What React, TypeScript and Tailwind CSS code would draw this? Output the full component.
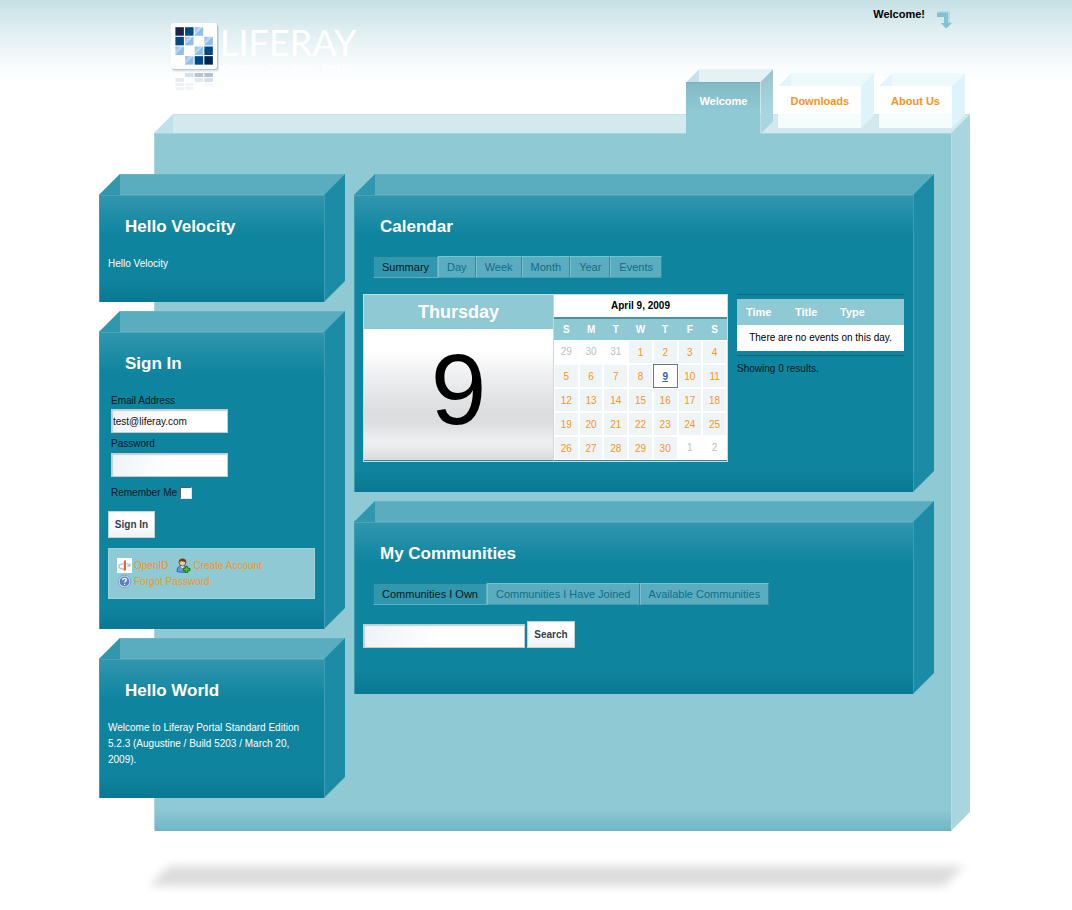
import React from "react";

function Panel({ title, children }: { title: string; children: React.ReactNode }) {
  return (
    <section className="grid grid-cols-[minmax(0,1fr)_21px] grid-rows-[21px_auto]">
      <div className="col-span-2 flex bg-[#6ab8c8] [clip-path:polygon(21px_0,100%_0,calc(100%_-_21px)_100%,0_100%)]">
        <div className="w-[21px] bg-[#3197ae]" />
        <div className="flex-1 border-b border-t border-[#66b3c4] bg-[#5aacbf]" />
      </div>
      <div className="border-l border-t border-l-[#3c9bb1] border-t-[#4aa4b8] bg-[#0e849f] bg-[linear-gradient(to_bottom,#3096ad_0,#0e849f_40px,#0e849f_calc(100%_-_22px),#0a7892_100%)] pb-[30px] pl-2 pr-[9px] pt-[19px]">
        <h2 className="mb-[17px] pl-[17px] text-[17px] font-bold leading-6 text-white">{title}</h2>
        {children}
      </div>
      <div className="-mt-[21px] border-l border-[#3f9db3] bg-[#1c8ba5] [clip-path:polygon(0_21px,100%_0,100%_calc(100%_-_21px),0_100%)]" />
    </section>
  );
}

function Tabs({ items }: { items: string[] }) {
  return (
    <nav className="mb-4 ml-[10px] flex">
      {items.map((t, i) => (
        <a
          key={t}
          href="#"
          className={
            i === 0
              ? "h-[22px] border border-b-[#5fb0c2] border-l-[#1f7f97] border-r-[#5fb0c2] border-t-[#1f7f97] bg-[#3197ae] px-2 text-[11px] leading-[21px] text-[#03191e]"
              : "h-[22px] border border-b-[#479bb0] border-l-[#7cc0ce] border-r-[#358ba2] border-t-[#7cc0ce] bg-[#5aacbf] px-2 text-[11px] leading-[21px] text-[#146c88]"
          }
        >
          {t}
        </a>
      ))}
    </nav>
  );
}

function SiteTab({ label, active = false }: { label: string; active?: boolean }) {
  if (active) {
    return (
      <a href="#" className="grid grid-cols-[74px_13px] grid-rows-[13px_52px] text-[11px] font-bold text-white">
        <span className="col-span-2 flex [clip-path:polygon(13px_0,100%_0,calc(100%_-_13px)_100%,0_100%)]">
          <span className="w-[13px] bg-[#c6e2e8]" />
          <span className="flex-1 bg-[#e4f1f5]" />
        </span>
        <span className="border-t border-[#79aeba] bg-[linear-gradient(to_bottom,#82b9c4,#8fc9d4_28px)] pt-2 text-center leading-5">{label}</span>
        <span className="-mt-[13px] bg-[linear-gradient(to_bottom,#99c4ce,#a8d5de_40px)] [clip-path:polygon(0_13px,100%_0,100%_calc(100%_-_13px),0_100%)]" />
      </a>
    );
  }
  return (
    <a href="#" className="mb-[5px] grid grid-cols-[auto_13px] grid-rows-[13px_42px] text-[11px] font-bold text-[#f7941d]">
      <span className="col-span-2 flex [clip-path:polygon(13px_0,100%_0,calc(100%_-_13px)_100%,0_100%)]">
        <span className="w-[13px] bg-[#e3f5fa]" />
        <span className="flex-1 bg-[#eef9fc]" />
      </span>
      <span className="bg-[linear-gradient(to_bottom,#fff_28px,#f5fcfc_28px)] px-[12px] pt-[5px] text-center leading-5">{label}</span>
      <span className="-mt-[13px] bg-[#dff4fa] [clip-path:polygon(0_13px,100%_0,100%_calc(100%_-_13px),0_100%)]" />
    </a>
  );
}

const logoCells: [number, number, string][] = [
  [0, 0, "#1c2350"], [1, 0, "#004a80"], [2, 0, "url(#pale)"],
  [0, 1, "#004a80"], [1, 1, "url(#pale)"], [3, 1, "url(#pale)"],
  [0, 2, "url(#pale)"], [2, 2, "url(#pale)"], [3, 2, "#004a80"],
  [1, 3, "url(#pale)"], [2, 3, "#004a80"], [3, 3, "#00264f"],
];

const reflected: [number, number, number, string, number][] = [
  [1, 51, 4, "#8fa9c5", 0.35], [2, 51, 4, "#53718f", 0.4], [3, 51, 4, "#53627f", 0.4],
  [0, 56, 4, "#8098b2", 0.2], [2, 56, 4, "#8098b2", 0.2], [3, 56, 4, "#8098b2", 0.3],
  [0, 61, 3, "#8098b2", 0.14], [1, 61, 3, "#8098b2", 0.1], [3, 61, 3, "#8098b2", 0.08],
  [0, 65, 3, "#8098b2", 0.1], [1, 65, 3, "#8098b2", 0.1],
];

function Logo() {
  return (
    <a href="#" aria-label="Liferay" className="flex">
      <svg width="50" height="72" viewBox="0 0 50 72" aria-hidden="true">
        <defs>
          <linearGradient id="pale" x1="0" y1="0" x2="1" y2="1">
            <stop offset="0" stopColor="#8cb8e6" />
            <stop offset="0.45" stopColor="#c3dbf3" />
            <stop offset="0.5" stopColor="#8ebbe8" />
            <stop offset="1" stopColor="#9ac2eb" />
          </linearGradient>
        </defs>
        <rect x="2" y="3" width="47" height="46.500" rx="3" fill="#6b8a93" opacity="0.2" />
        <rect x="1.5" y="2" width="46.500" height="46" rx="3" fill="#7a969d" opacity="0.35" />
        <rect x="1" y="1" width="46" height="46" rx="3" fill="#fff" />
        {logoCells.map(([c, r, f]) => (
          <rect key={`${c}${r}`} x={5.4 + c * 9.65} y={5.2 + r * 9.65} width="8.5" height="8.5" fill={f} />
        ))}
        {reflected.map(([c, y, h, f, o]) => (
          <rect key={`r${c}${y}`} x={5.4 + c * 9.65} y={y} width="8.5" height={h} fill={f} opacity={o} />
        ))}
      </svg>
      <span className="flex flex-col text-white">
        <span className="font-['Lato',sans-serif] text-[36px] leading-[40px]">LIFERAY</span>
        <span className="pl-[2px] font-['Lato',sans-serif] text-[9px] leading-3">Enterprise. Open Source. For Life.</span>
      </span>
    </a>
  );
}

const weeks = [
  [29, 30, 31, 1, 2, 3, 4],
  [5, 6, 7, 8, 9, 10, 11],
  [12, 13, 14, 15, 16, 17, 18],
  [19, 20, 21, 22, 23, 24, 25],
  [26, 27, 28, 29, 30, 1, 2],
];

function Calendar() {
  return (
    <div className="flex w-[365px] shrink-0 border border-[#c5dce1] bg-white">
      <div className="flex flex-1 flex-col border-b border-r border-b-[#2d8aa2] border-r-[#d0d5d7]">
        <div className="h-[34px] bg-[#8fc9d4] text-center text-[18px] font-bold leading-[34px] text-white">Thursday</div>
        <div className="flex flex-1 items-center justify-center bg-[linear-gradient(to_bottom,#fff_0%,#fff_16%,#ecedee_38%,#dcdddf_64%,#dddee0_72%,#eeeff1_85%,#e8e9eb_92%,#d9dadb_100%)] pb-3 text-[100px] leading-[100px] text-black">
          9
        </div>
      </div>
      <div className="w-[173px] border-b border-[#2d8aa2]">
        <div className="h-[24px] border-b-2 border-[#4d8fa3] text-center text-[10px] font-bold leading-[22px] text-black">April 9, 2009</div>
        <table className="w-full table-fixed border-separate border-spacing-0 text-center text-[10px]">
          <thead>
            <tr className="bg-[#8fc9d4] text-white">
              {["S", "M", "T", "W", "T", "F", "S"].map((d, i) => (
                <th key={i} className="h-[21px] p-0 font-bold">{d}</th>
              ))}
            </tr>
          </thead>
          <tbody>
            {weeks.map((w, r) => (
              <tr key={r}>
                {w.map((d, c) => {
                  const out = (r === 0 && d > 20) || (r === 4 && d < 10);
                  const today = r === 1 && d === 9;
                  return (
                    <td
                      key={c}
                      className={
                        today
                          ? "h-[24px] border border-[#70757a] bg-white p-0"
                          : out
                            ? "h-[24px] border border-white bg-white p-0 text-[#b9bfc3]"
                            : "h-[24px] border border-white bg-[#eff4f7] p-0"
                      }
                    >
                      {out ? d : (
                        <a href="#" className={today ? "block pt-[2px] font-bold leading-5 text-[#3a669e] underline" : "block pt-[2px] leading-5 text-[#f7941d]"}>{d}</a>
                      )}
                    </td>
                  );
                })}
              </tr>
            ))}
          </tbody>
        </table>
      </div>
    </div>
  );
}

function OpenIdIcon() {
  return (
    <svg width="15" height="15" viewBox="0 0 15 15" aria-hidden="true">
      <rect width="15" height="15" fill="#fff" />
      <path d="M6.500 5.800C3.500 5.800 1.800 7 1.800 8.300S3.500 11 7 11" fill="none" stroke="#bcbcbc" strokeWidth="1.300" />
      <path d="M9 5.800c1.600 0 2.800.4 3.700 1M13.200 5.500v2.700h-2.800z" fill="#bcbcbc" stroke="#bcbcbc" strokeWidth="0.800" />
      <path d="M6.800 3l2.200-1v10l-2.200 1z" fill="#f0622a" />
    </svg>
  );
}

function AddUserIcon() {
  return (
    <svg width="15" height="15" viewBox="0 0 15 15" aria-hidden="true">
      <path d="M1 13.500c0-4 2-6 5-6s5.500 2 5.500 6c-3 1-7.500 1-10.500 0z" fill="#5d9be0" stroke="#2e63b0" />
      <path d="M4.500 8l2 2.500L8.500 8z" fill="#fff" />
      <circle cx="6.500" cy="4.700" r="3.300" fill="#f6c99b" stroke="#6d3b1a" strokeWidth="0.800" />
      <path d="M2.800 5C2.300 2 4 .5 6.500.5S10.700 2 10.200 5C9 3.500 7 4 5.500 3.300 4.500 3 3.500 4 2.800 5z" fill="#70401c" />
      <path d="M9.300 8.300h2.400v2h2.300v2.400h-2.300v2H9.300v-2H7.200v-2.400h2.100z" fill="#45c42d" stroke="#16720c" strokeWidth="0.900" />
    </svg>
  );
}

function HelpIcon() {
  return (
    <svg width="15" height="15" viewBox="0 0 15 15" aria-hidden="true">
      <circle cx="7.500" cy="7.500" r="6.300" fill="#d9e5f5" stroke="#6d8fc4" strokeWidth="0.800" />
      <circle cx="7.500" cy="7.500" r="4.900" fill="#5680c2" />
      <path d="M5.700 6.200c0-2.400 3.800-2.300 3.600-.1-.1 1.200-1.700 1.200-1.700 2.500M7.600 9.800v1.300" fill="none" stroke="#fff" strokeWidth="1.300" />
    </svg>
  );
}

const field =
  "block h-6 rounded-none border border-[#c2cdd2] bg-[linear-gradient(100deg,#eef3f7,#fff_50%)] px-px text-[10px] text-[#111] shadow-[inset_1px_1px_1px_#c9ced2] outline-none";
const button =
  "h-[27px] rounded-none border border-[#c0d3d8] bg-[linear-gradient(to_bottom,#fff_40%,#eef2f5)] text-[10px] font-bold text-[#34404f]";
const iconLink = "flex items-center gap-[2px] text-[10px] text-[#f7941d]";

export default function App() {
  return (
    <div className="min-h-screen bg-white bg-[linear-gradient(to_bottom,#c6e0e6_0,#dfeef1_30px,#f6fafb_62px,#fff_82px)] font-['Liberation_Sans',Arial,sans-serif] text-[11px] leading-4 text-[#03191e]">
      <div className="mx-auto w-full max-w-[874px] pb-6">
        <header className="relative z-10 flex h-[133px] justify-between pl-[71px] pr-2">
          <div className="pt-[22px]">
            <Logo />
          </div>
          <div className="flex flex-col items-end justify-between">
            <button type="button" className="mr-3 mt-[6px] flex gap-3 text-[11px] font-bold leading-4 text-black">
              Welcome!
              <svg width="16" height="18" viewBox="0 0 16 18" className="mt-[5px]" aria-hidden="true">
                <path d="M2 0h11v11h3l-6 6-4-5h3V4H2z" fill="#b5dbe3" />
                <path d="M0 1.500h11v10.500h3.500L9 17.500 4 12h3V6H0z" fill="#82c2d0" />
              </svg>
            </button>
            <nav className="flex items-end gap-[5px]">
              <div className="-mb-px"><SiteTab label="Welcome" active /></div>
              <SiteTab label="Downloads" />
              <SiteTab label="About Us" />
            </nav>
          </div>
        </header>

        <main className="-mt-[19px] ml-[55px] mr-[3px] grid grid-cols-[minmax(0,1fr)_19px] grid-rows-[19px_auto]">
          <div className="col-span-2 flex [clip-path:polygon(19px_0,100%_0,calc(100%_-_19px)_100%,0_100%)]">
            <div className="w-[19px] bg-[#bfe1e7]" />
            <div className="flex-1 border-t border-[#c6e3e9] bg-[#d2e9ed]" />
          </div>
          <div className="border-l border-t border-[#a8d5de] bg-[linear-gradient(to_bottom,#8fc9d4_calc(100%_-_22px),#70b5c4_100%)] pb-[33px] pr-[17px] pt-10">
            <div className="-ml-14 flex gap-[9px]">
              <div className="flex w-[246px] shrink-0 flex-col gap-[9px]">
                <Panel title="Hello Velocity">
                  <p className="text-[10px] text-white">Hello Velocity</p>
                </Panel>

                <Panel title="Sign In">
                  <form onSubmit={(e) => e.preventDefault()}>
                    <div className="pl-[3px] text-[10px]">
                      <label htmlFor="email" className="block">Email Address</label>
                      <input id="email" type="text" defaultValue="test@liferay.com" className={`${field} w-[117px]`} />
                      <label htmlFor="pw" className="mt-[3px] block">Password</label>
                      <input id="pw" type="password" className={`${field} mt-px w-[117px]`} />
                      <label className="mt-2 flex items-center gap-[3px]">
                        Remember Me
                        <input
                          type="checkbox"
                          className="size-[12px] appearance-none border border-b-[#e6e4e0] border-l-[#5c5c5c] border-r-[#e6e4e0] border-t-[#5c5c5c] bg-white"
                        />
                      </label>
                    </div>
                    <button type="submit" className={`${button} mt-[10px] block w-[47px]`}>Sign In</button>
                    <div className="mt-[10px] flex h-[51px] flex-wrap content-center gap-x-2 border border-[#a3d1da] bg-[#8fc9d4] px-2">
                      <a href="#" className={iconLink}><OpenIdIcon />OpenID</a>
                      <a href="#" className={iconLink}><AddUserIcon />Create Account</a>
                      <a href="#" className={iconLink}><HelpIcon />Forgot Password</a>
                    </div>
                  </form>
                </Panel>

                <Panel title="Hello World">
                  <p className="text-[10px] text-white">
                    Welcome to Liferay Portal Standard Edition 5.2.3 (Augustine / Build 5203 / March 20, 2009).
                  </p>
                </Panel>
              </div>

              <div className="flex min-w-0 flex-1 flex-col gap-[9px]">
                <Panel title="Calendar">
                  <Tabs items={["Summary", "Day", "Week", "Month", "Year", "Events"]} />
                  <div className="flex items-start gap-[9px]">
                    <Calendar />
                    <div className="min-w-0 flex-1">
                      <div className="border-b border-t border-[#0b6880] py-1">
                        <table className="w-full text-left">
                          <thead>
                            <tr className="h-[26px] bg-[#8fc9d4] text-white">
                              <th className="w-[49px] p-0 pl-[9px]">Time</th>
                              <th className="w-[45px] p-0 pl-[9px]">Title</th>
                              <th className="p-0 pl-[9px]">Type</th>
                            </tr>
                          </thead>
                          <tbody>
                            <tr className="h-[26px] bg-white">
                              <td colSpan={3} className="p-0 text-center text-[10px] text-black">There are no events on this day.</td>
                            </tr>
                          </tbody>
                        </table>
                      </div>
                      <p className="mt-[5px] text-[10px]">Showing 0 results.</p>
                    </div>
                  </div>
                </Panel>

                <Panel title="My Communities">
                  <Tabs items={["Communities I Own", "Communities I Have Joined", "Available Communities"]} />
                  <form className="flex items-end gap-[2px] pb-4" onSubmit={(e) => e.preventDefault()}>
                    <input type="text" aria-label="Search communities" className={`${field} w-[162px]`} />
                    <button type="submit" className={`${button} w-12`}>Search</button>
                  </form>
                </Panel>
              </div>
            </div>
          </div>
          <div className="-mt-[19px] border-l border-[#b4dce4] bg-[#a8d5de] [clip-path:polygon(0_19px,100%_0,100%_calc(100%_-_19px),0_100%)]" />
        </main>

        <div className="ml-[50px] mr-[9px] mt-[35px] blur-[5px]">
          <div className="h-[20px] bg-[#dcdcdc] [clip-path:polygon(20px_0,100%_0,calc(100%_-_20px)_100%,0_100%)]" />
        </div>
      </div>
    </div>
  );
}
